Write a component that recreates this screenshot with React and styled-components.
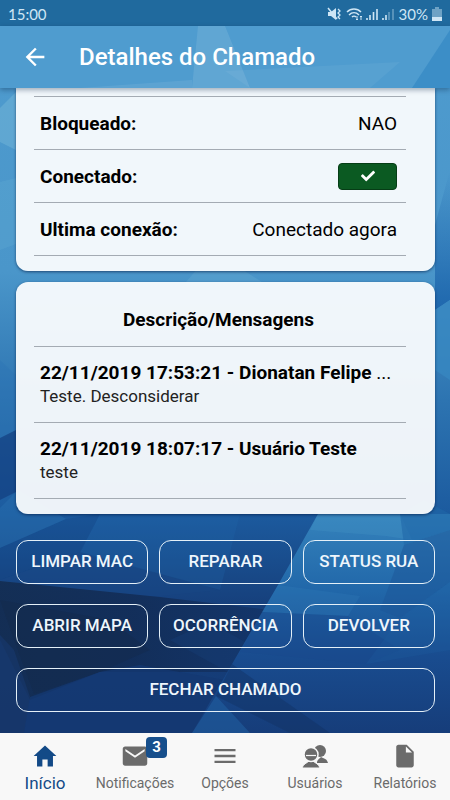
import styled, { createGlobalStyle, css } from "styled-components";
import { IoMdArrowBack, IoMdDocument, IoMdHome, IoMdMail, IoMdMenu } from "react-icons/io";
import { FaCheck } from "react-icons/fa";

const GlobalStyle = createGlobalStyle`
  *, *::before, *::after {
    box-sizing: border-box;
  }

  body {
    margin: 0;
    font-family: Roboto, "Liberation Sans", sans-serif;
    color: #000;
  }

  button {
    font-family: inherit;
    cursor: pointer;
  }
`;

const Page = styled.div`
  position: relative;
  display: flex;
  flex-direction: column;
  min-height: 100vh;
  background: #174c8f;
`;

const Backdrop = styled.svg`
  position: absolute;
  inset: 0;
  width: 100%;
  height: 100%;
`;

const StatusBar = styled.div`
  position: relative;
  display: flex;
  align-items: center;
  justify-content: space-between;
  height: 26px;
  padding: 2px 8px 0;
  background: #206a9e;
  color: #cfe6f5;
  font-family: Lato, sans-serif;
  font-size: 15px;
`;

const StatusIcons = styled.div`
  display: flex;
  align-items: center;
  gap: 4px;
`;

const Header = styled.header`
  position: relative;
  z-index: 1;
  display: flex;
  align-items: center;
  gap: 30px;
  height: 62px;
  padding: 0 21px;
  box-shadow: 0 2px 5px rgba(0, 30, 60, 0.35);
  overflow: hidden;
  background: #4f9ccf;
`;

const BackButton = styled.button`
  position: relative;
  display: flex;
  padding: 0;
  border: 0;
  background: none;
  color: #fff;
  font-size: 28px;
`;

const Title = styled.h1`
  position: relative;
  margin: 0;
  font-size: 24px;
  font-weight: 500;
  color: #fff;
`;

const Content = styled.main`
  position: relative;
  flex: 1;
  padding: 0 15px 21px 16px;
`;

const Card = styled.section`
  padding: ${({ $continued }) => ($continued ? "8px" : "12px")} 29px 15px 18px;
  border-radius: ${({ $continued }) => ($continued ? "0 0 12px 12px" : "12px")};
  background: rgba(255, 255, 255, 0.92);
  box-shadow: 0 1px 3px rgba(0, 20, 60, 0.6);

  & + & {
    margin-top: 11px;
  }
`;

const line = css`
  border-bottom: 1px solid #a4abb3;
`;

const Fields = styled.dl`
  margin: 0;
  border-top: 1px solid #a4abb3;
`;

const Field = styled.div`
  ${line}
  display: flex;
  align-items: center;
  justify-content: space-between;
  height: 53px;
  padding: 0 9px 0 6px;
  font-size: 19px;

  dt {
    font-weight: 700;
  }

  dd {
    margin: 0;
  }
`;

const ConnectedButton = styled.button`
  display: flex;
  align-items: center;
  justify-content: center;
  width: 59px;
  height: 27px;
  border: 1px solid #063d16;
  border-radius: 4px;
  background: #0b5a22;
  color: #fff;
  font-size: 14px;
`;

const CardTitle = styled.h2`
  ${line}
  margin: 0;
  padding: 14px 9px 14px 6px;
  font-size: 19px;
  line-height: 24px;
  font-weight: 700;
  text-align: center;
`;

const Messages = styled.ul`
  margin: 0;
  padding: 0;
  list-style: none;
`;

const Message = styled.li`
  ${line}
  height: 76px;
  padding: 14px 9px 0 6px;

  h3 {
    margin: 0;
    font-size: 19px;
    font-weight: 700;
    line-height: 24px;
    white-space: nowrap;
  }

  p {
    margin: 0;
    font-size: 17px;
    line-height: 22px;
    color: #222;
  }
`;

const More = styled.span`
  font-weight: 400;
`;

const Actions = styled.div`
  display: grid;
  grid-template-columns: repeat(3, 1fr);
  gap: 20px 11px;
  margin-top: 26px;
`;

const ActionButton = styled.button`
  grid-column: ${({ $wide }) => ($wide ? "1 / -1" : "auto")};
  height: 44px;
  padding: 0 0 2px;
  border: 1px solid #e4f0f8;
  border-radius: 12px;
  background: none;
  color: #eef6fc;
  font-size: 17px;
  font-weight: 500;
`;

const TabBar = styled.nav`
  position: relative;
  display: grid;
  grid-template-columns: repeat(5, 1fr);
  height: 67px;
  background: #f8f8f8;
`;

const Tab = styled.a`
  display: flex;
  flex-direction: column;
  align-items: center;
  justify-content: flex-end;
  gap: 4px;
  padding-bottom: 8px;
  color: ${({ $active }) => ($active ? "#134a87" : "#6b6b6b")};
  font-size: ${({ $active }) => ($active ? "17px" : "14px")};
  line-height: 18px;
  text-decoration: none;
`;

const TabIcon = styled.span`
  position: relative;
  display: flex;
  font-size: 28px;
`;

const TabBadge = styled.span`
  position: absolute;
  top: -5px;
  left: 25px;
  width: 21px;
  border-radius: 4px;
  background: #174f8c;
  color: #fff;
  font-size: 15px;
  font-weight: 700;
  line-height: 21px;
  text-align: center;
`;

const UsersIcon = () => (
  <svg width="28" height="28" viewBox="0 0 28 28" fill="currentColor" aria-hidden="true">
    <circle cx="19" cy="9" r="6" />
    <path d="M16 20C17 17 18 17 20 15C24 17 26 17 27 21H16Z" />
    <path d="M1 26C2 22 6 21 8 19H12C14 21 18 22 19 26Z" stroke="#f8f8f8" strokeWidth="1" />
    <circle cx="10" cy="12.500" r="7" stroke="#f8f8f8" strokeWidth="1.5" />
    <path d="M5 13.500H15" stroke="#f8f8f8" strokeWidth="1.2" />
  </svg>
);

const fields = [
  { label: "Bloqueado:", value: "NAO" },
  { label: "Conectado:", connected: true },
  { label: "Ultima conexão:", value: "Conectado agora" },
];

const messages = [
  { title: "22/11/2019 17:53:21 - Dionatan Felipe", shortened: true, text: "Teste. Desconsiderar" },
  { title: "22/11/2019 18:07:17 - Usuário Teste", text: "teste" },
];

const actions = ["LIMPAR MAC", "REPARAR", "STATUS RUA", "ABRIR MAPA", "OCORRÊNCIA", "DEVOLVER"];

const tabs = [
  { label: "Início", icon: IoMdHome, active: true },
  { label: "Notificações", icon: IoMdMail, badge: 3 },
  { label: "Opções", icon: IoMdMenu },
  { label: "Usuários", icon: UsersIcon },
  { label: "Relatórios", icon: IoMdDocument },
];

const Facets = () => (
  <Backdrop viewBox="0 0 450 800" preserveAspectRatio="none" aria-hidden="true">
    <defs>
      <linearGradient id="sky" x1="0" y1="0" x2="0" y2="1">
        <stop offset="0" stopColor="#4f9ccf" />
        <stop offset="0.34" stopColor="#4a96ca" />
        <stop offset="0.5" stopColor="#2d74b1" />
        <stop offset="0.64" stopColor="#1c5b9f" />
        <stop offset="0.76" stopColor="#163f7b" />
        <stop offset="0.92" stopColor="#143a74" />
      </linearGradient>
      <linearGradient id="beam" x1="0" y1="0" x2="0" y2="1">
        <stop offset="0" stopColor="#3583bc" />
        <stop offset="0.35" stopColor="#2167a9" />
        <stop offset="0.65" stopColor="#194c8f" />
        <stop offset="1" stopColor="#163d7a" />
      </linearGradient>
      <linearGradient id="shade" x1="0" y1="0" x2="1" y2="0">
        <stop offset="0" stopColor="#132b4e" />
        <stop offset="0.5" stopColor="#122c55" />
        <stop offset="1" stopColor="#133468" />
      </linearGradient>
      <linearGradient id="edge" x1="0" y1="0" x2="0" y2="1">
        <stop offset="0" stopColor="#1f68ae" stopOpacity="0" />
        <stop offset="1" stopColor="#1f68ae" />
      </linearGradient>
    </defs>
    <rect width="450" height="800" fill="url(#sky)" />
    <path d="M0 108L16 92V150L0 142Z" fill="#85c4dd" fillOpacity="0.35" />
    <path d="M0 182L16 178V244L0 250Z" fill="#7cc0dc" fillOpacity="0.15" />
    <path d="M186 282L198 268H240L262 282Z" fill="#7cc0dc" fillOpacity="0.2" />
    <path d="M450 170L435 225V310L450 300Z" fill="url(#edge)" />
    <path d="M450 300L435 310V370L450 380Z" fill="#3787c0" fillOpacity="0.8" />
    <path d="M0 360L16 375V432L0 440Z" fill="#2a74b4" fillOpacity="0.35" />
    <path d="M0 438L16 430V492L0 500Z" fill="#123f80" fillOpacity="0.7" />
    <path d="M0 508L18 490L66 519L0 548Z" fill="#2a73b2" fillOpacity="0.4" />
    <path d="M100 514H150L240 514L220 590L80 553Z" fill="#2167aa" fillOpacity="0.25" />
    <path d="M66 519L100 514L80 552L0 580V548Z" fill="#113f80" fillOpacity="0.25" />
    <path d="M0 580L80 552L220 590L150 597Z" fill="#174684" fillOpacity="0.5" />
    <path d="M0 581L160 597L270 610L228 672L100 672L30 700L0 640Z" fill="url(#shade)" fillOpacity="0.85" />
    <path d="M0 600L110 620L150 650L100 672L34 694L14 640Z" fill="#142944" fillOpacity="0.3" />
    <path d="M170 640L210 622L250 645L228 672Z" fill="#173f78" fillOpacity="0.4" />
    <path d="M30 697L100 672L140 665L225 680L194 733H24Z" fill="#143872" fillOpacity="0.8" />
    <path d="M0 635L14 650L30 697L24 733H0Z" fill="#163668" fillOpacity="0.8" />
    <path d="M318 514H450V733H192L278 585Z" fill="url(#beam)" />
    <path d="M318 514H400L412 540L386 536L310 530Z" fill="#4496c7" fillOpacity="0.3" />
    <path d="M424 500L450 514V530L404 545L400 514Z" fill="#2067a8" fillOpacity="0.6" />
    <path d="M404 545L450 530V582L400 618L380 610Z" fill="#1b5598" fillOpacity="0.5" />
    <path d="M278 585L360 596L348 616L262 612Z" fill="#3280ba" fillOpacity="0.25" />
    <path d="M262 612L348 616L400 650L366 664L240 652Z" fill="#18498b" fillOpacity="0.4" />
    <path d="M400 618L450 582V650L366 664Z" fill="#1f5da0" fillOpacity="0.3" />
    <path d="M232 664L330 733H290L216 696Z" fill="#122f60" fillOpacity="0.4" />
    <path d="M216 696L250 733H192Z" fill="#2263a6" fillOpacity="0.5" />
  </Backdrop>
);

const HeaderFacets = () => (
  <Backdrop viewBox="0 0 450 62" preserveAspectRatio="none" aria-hidden="true">
    <path d="M198 0H225L250 62H192Z" fill="#fff" fillOpacity="0.1" />
    <path d="M225 45L400 36L370 62H250Z" fill="#fff" fillOpacity="0.05" />
    <path d="M450 4L412 62H450Z" fill="#2a7fc0" fillOpacity="0.5" />
    <path d="M80 62L192 54V62Z" fill="#fff" fillOpacity="0.08" />
  </Backdrop>
);

const SystemIcons = () => (
  <svg width="68" height="16" viewBox="0 0 68 16" fill="none" stroke="currentColor" aria-hidden="true">
    <path d="M1 6H4L9 2V14L4 10H1Z" fill="currentColor" stroke="none" />
    <path d="M1 2L10 13" strokeWidth="1.5" />
    <path d="M11 3L13 5L11 7L13 9L11 11L13 13" strokeWidth="1.3" />
    <path d="M20 6C24 2 30 2 34 6M22 9C25 6 29 6 32 9M25 11C26 10 28 10 29 11" strokeWidth="1.5" />
    <path d="M30 10V14M29 13L30 14L31 13M34 14V10M33 11L34 10L35 11" />
    <path d="M40 12V14M43 9V14M46.500 6V14M50 3V14" strokeWidth="1.6" />
    <path d="M56 12V14M59 9V14" strokeWidth="1.6" />
    <path d="M62 6V14M66 3V14" strokeWidth="1.6" opacity="0.4" />
  </svg>
);

const BatteryIcon = () => (
  <svg width="10" height="14" viewBox="0 0 10 14" fill="currentColor" aria-hidden="true">
    <path d="M3 0H7V2H10V14H0V2H3Z" opacity="0.45" />
    <path d="M0 10H10V14H0Z" />
  </svg>
);

const App = () => (
  <>
    <GlobalStyle />
    <Page>
      <Facets />
      <StatusBar>
        <span>15:00</span>
        <StatusIcons>
          <SystemIcons />
          <span>30%</span>
          <BatteryIcon />
        </StatusIcons>
      </StatusBar>
      <Header>
        <HeaderFacets />
        <BackButton type="button" aria-label="Voltar">
          <IoMdArrowBack />
        </BackButton>
        <Title>Detalhes do Chamado</Title>
      </Header>

      <Content>
        <Card $continued>
          <Fields>
            {fields.map(({ label, value, connected }) => (
              <Field key={label}>
                <dt>{label}</dt>
                <dd>
                  {connected ? (
                    <ConnectedButton type="button" aria-label="Conectado">
                      <FaCheck />
                    </ConnectedButton>
                  ) : (
                    value
                  )}
                </dd>
              </Field>
            ))}
          </Fields>
        </Card>

        <Card>
          <CardTitle>Descrição/Mensagens</CardTitle>
          <Messages>
            {messages.map(({ title, shortened, text }) => (
              <Message key={title}>
                <h3>
                  {title}
                  {shortened ? <More> ...</More> : null}
                </h3>
                <p>{text}</p>
              </Message>
            ))}
          </Messages>
        </Card>

        <Actions>
          {actions.map((label) => (
            <ActionButton key={label} type="button">
              {label}
            </ActionButton>
          ))}
          <ActionButton type="button" $wide>
            FECHAR CHAMADO
          </ActionButton>
        </Actions>
      </Content>

      <TabBar>
        {tabs.map(({ label, icon: Icon, active, badge }) => (
          <Tab key={label} href="#" $active={active} aria-current={active ? "page" : undefined}>
            <TabIcon>
              <Icon />
              {badge ? <TabBadge>{badge}</TabBadge> : null}
            </TabIcon>
            {label}
          </Tab>
        ))}
      </TabBar>
    </Page>
  </>
);

export default App;
